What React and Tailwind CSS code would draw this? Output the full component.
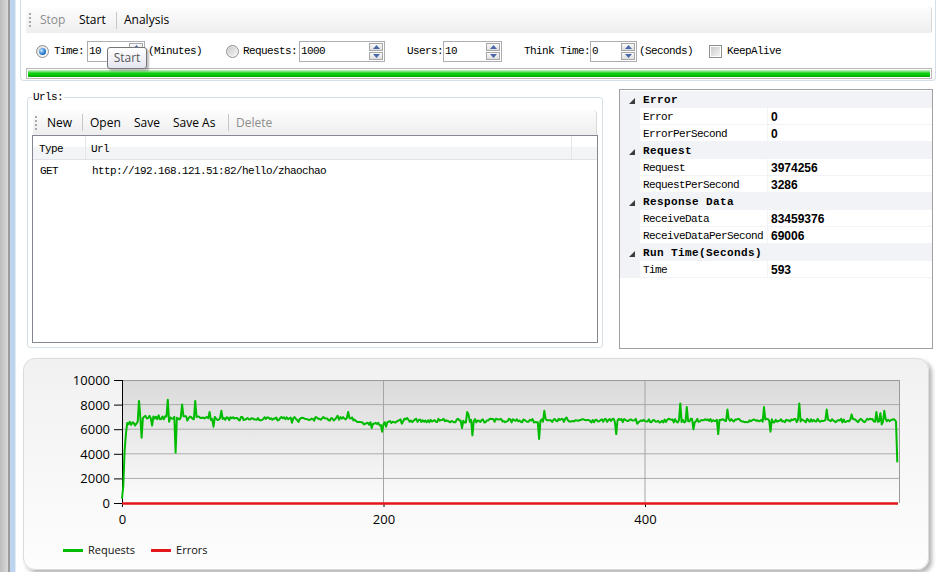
import React from "react";

const MONO = "font-['Liberation_Mono',monospace] text-[11px] tracking-[-0.6px]";

function mulberry32(a) {
  return function () {
    a |= 0;
    a = (a + 0x6d2b79f5) | 0;
    let t = Math.imul(a ^ (a >>> 15), 1 | a);
    t = (t + Math.imul(t ^ (t >>> 7), 61 | t)) ^ t;
    return ((t ^ (t >>> 14)) >>> 0) / 4294967296;
  };
}

const OVERRIDES = {
  0: 350, 1: 1400, 2: 4200, 3: 5600, 4: 6500, 5: 6400, 6: 6600, 7: 6350, 8: 6550, 9: 6500,
  10: 6300, 11: 6450, 12: 6600, 13: 8300, 14: 7000, 15: 5300, 16: 6900, 23: 6300, 35: 8400,
  41: 4100, 46: 8000, 56: 8300, 67: 7400, 70: 6200, 76: 7500, 165: 7100, 173: 7400, 191: 6100,
  199: 5800, 260: 6100, 264: 7400, 265: 7200, 268: 5500, 319: 5200, 323: 7500, 378: 5600,
  427: 8100, 432: 7800, 437: 6000, 456: 5600, 463: 7600, 491: 7800, 496: 5800, 518: 8100,
  539: 7600, 558: 7200, 577: 7400, 580: 7300, 583: 7500, 593: 3300,
};

function baseAt(s) {
  if (s < 80) return 6980 - (s - 16) * 2;
  if (s < 175) return 6850;
  if (s < 185) return 6850 - (s - 175) * 40;
  if (s < 200) return 6450;
  if (s < 215) return 6450 + (s - 200) * 17;
  return 6700;
}

const rand = mulberry32(42);
const POINTS = [];
for (let s = 0; s <= 593; s++) {
  let v;
  if (OVERRIDES[s] !== undefined) v = OVERRIDES[s];
  else {
    v = baseAt(s) + (rand() - 0.5) * 300;
    if (rand() < 0.06) v += (rand() - 0.5) * 700;
  }
  const x = 98 + s * 1.3075;
  const y = 144 - v * 0.0123;
  POINTS.push(`${x.toFixed(1)},${y.toFixed(1)}`);
}
const POLY = POINTS.join(" ");

function Grip() {
  return (
    <div className="flex flex-col gap-[2px]">
      <span className="h-[2px] w-[2px] bg-[#a9a9a9]" />
      <span className="h-[2px] w-[2px] bg-[#a9a9a9]" />
      <span className="h-[2px] w-[2px] bg-[#a9a9a9]" />
      <span className="h-[2px] w-[2px] bg-[#a9a9a9]" />
    </div>
  );
}

function Sep() {
  return <span className="h-[17px] w-[1px] bg-[#c6c6c6]" />;
}

function Radio({ checked }) {
  return (
    <span className="flex h-[13px] w-[13px] shrink-0 items-center justify-center rounded-full border border-[#8e8f8f] bg-[linear-gradient(135deg,#dcdcdc,#ffffff)]">
      {checked ? (
        <span className="h-[7px] w-[7px] rounded-full bg-[radial-gradient(circle_at_35%_35%,#c8e6ff,#2d7fd3_55%,#12468f)]" />
      ) : (
        <span className="h-[9px] w-[9px] rounded-full bg-[linear-gradient(135deg,#c9c9c9,#f6f6f6)]" />
      )}
    </span>
  );
}

function Arrow({ up }) {
  return (
    <svg width="7" height="4" viewBox="0 0 7 4">
      {up ? <polygon points="0,4 7,4 3.5,0" fill="#4a68a8" /> : <polygon points="0,0 7,0 3.5,4" fill="#4a68a8" />}
    </svg>
  );
}

function Spin({ value, width }) {
  return (
    <div className="flex h-[21px] shrink-0 border border-[#abadb3] bg-white" style={{ width }}>
      <span className={`flex-1 pl-[1px] leading-[18px] text-black ${MONO}`}>{value}</span>
      <div className="flex flex-col justify-center gap-[1px] pr-[1px]">
        <span className="flex h-[8px] w-[14px] items-center justify-center border border-[#a7a7a7] bg-linear-to-b from-[#fafafa] to-[#dedede]">
          <Arrow up />
        </span>
        <span className="flex h-[8px] w-[14px] items-center justify-center border border-[#a7a7a7] bg-linear-to-b from-[#fafafa] to-[#dedede]">
          <Arrow />
        </span>
      </div>
    </div>
  );
}

function TopGroup() {
  return (
    <div className="ml-[4px] flex w-[916px] flex-col rounded-b-[4px] border border-t-0 border-[#d5dfe5] pl-[5px] pr-[3px] pb-[1px] pt-[7px]">
      <div className="flex h-[26px] items-center rounded-r-[3px] border-r border-[#d9d9d9] bg-linear-to-b from-[#fdfdfd] to-[#eeeeee] text-[12px]">
        <span className="ml-[3px]">
          <Grip />
        </span>
        <span className="ml-[9px] w-[39px] text-[#8d8d8d]">Stop</span>
        <span className="w-[37px] text-black">Start</span>
        <Sep />
        <span className="ml-[7px] text-black">Analysis</span>
      </div>
      <div className={`mt-[8px] flex h-[21px] items-center text-black ${MONO}`}>
        <span className="ml-[10px]">
          <Radio checked />
        </span>
        <span className="ml-[5px]">Time:</span>
        <span className="ml-[3px]">
          <Spin value="10" width={58} />
        </span>
        <span className="ml-[3px]">(Minutes)</span>
        <span className="ml-[24px]">
          <Radio />
        </span>
        <span className="ml-[4px]">Requests:</span>
        <span className="ml-[2px]">
          <Spin value="1000" width={86} />
        </span>
        <span className="ml-[22px]">Users:</span>
        <Spin value="10" width={59} />
        <span className="ml-[22px]">Think Time:</span>
        <Spin value="0" width={47} />
        <span className="ml-[2px]">(Seconds)</span>
        <span className="ml-[16px] flex h-[13px] w-[13px] items-center justify-center border border-[#8e8f8f] bg-white">
          <span className="h-[9px] w-[9px] bg-[linear-gradient(135deg,#cbcbcb,#f4f4f4)]" />
        </span>
        <span className="ml-[5px]">KeepAlive</span>
      </div>
      <div className="mt-[6px] h-[11px] border border-[#b8b8b8] bg-white p-[1px]">
        <div className="h-full w-full bg-[linear-gradient(to_bottom,#c4f2c4_0%,#7fe37f_22%,#12d012_45%,#07c607_75%,#0a9c0a_100%)]" />
      </div>
    </div>
  );
}

function UrlsBox() {
  return (
    <fieldset className="ml-[11px] mt-[1px] w-[576px] rounded-[3px] border border-[#d5dfe5] px-[4px] pb-[4px]">
      <legend className={`px-[1px] leading-[14px] text-black ${MONO}`}>Urls:</legend>
      <div className="mx-[1px] mt-[6px] flex h-[25px] items-center rounded-tr-[4px] border-r border-[#d9d9d9] bg-linear-to-b from-[#fdfdfd] to-[#eeeeee] text-[12px]">
        <span className="ml-[2px]">
          <Grip />
        </span>
        <span className="ml-[10px] w-[35px] text-black">New</span>
        <Sep />
        <span className="ml-[7px] w-[44px] text-black">Open</span>
        <span className="w-[39px] text-black">Save</span>
        <span className="w-[55px] text-black">Save As</span>
        <Sep />
        <span className="ml-[7px] text-[#8d8d8d]">Delete</span>
      </div>
      <div className="h-[208px] border border-[#828790] bg-white">
        <div className={`flex h-[24px] border-b border-[#e2e3ea] bg-[linear-gradient(to_bottom,#ffffff_0%,#ffffff_45%,#f3f4f6_50%,#f3f4f6_100%)] text-black ${MONO}`}>
          <span className="flex w-[53px] items-center border-r border-[#e3e5e8] pl-[6px] pt-[3px]">Type</span>
          <span className="flex w-[486px] items-center border-r border-[#e3e5e8] pl-[5px] pt-[3px]">Url</span>
          <span className="flex-1" />
        </div>
        <div className={`flex h-[20px] items-center pt-[2px] text-black ${MONO}`}>
          <span className="w-[53px] pl-[7px]">GET</span>
          <span className="pl-[6px]">http://192.168.121.51:82/hello/zhaochao</span>
        </div>
      </div>
    </fieldset>
  );
}

const GROUPS = [
  { name: "Error", rows: [["Error", "0"], ["ErrorPerSecond", "0"]] },
  { name: "Request", rows: [["Request", "3974256"], ["RequestPerSecond", "3286"]] },
  { name: "Response Data", rows: [["ReceiveData", "83459376"], ["ReceiveDataPerSecond", "69006"]] },
  { name: "Run Time(Seconds)", rows: [["Time", "593"]] },
];

function Tri() {
  return (
    <svg width="6" height="6" viewBox="0 0 6 6">
      <polygon points="6,0 6,6 0,6" fill="#3c3c3c" />
    </svg>
  );
}

function PropGrid() {
  return (
    <div className="ml-[16px] flex h-[260px] w-[314px] flex-col border border-[#a0a0a0] bg-white pt-[1px]">
      {GROUPS.map((g) => (
        <React.Fragment key={g.name}>
          <div className="flex h-[17px] items-center bg-[#f1f3f7] pt-[2px]">
            <span className="flex w-[20px] justify-center pl-[4px]">
              <Tri />
            </span>
            <span className="pl-[3px] font-['Liberation_Mono',monospace] text-[11px] font-bold tracking-[0.4px] text-black">
              {g.name}
            </span>
          </div>
          {g.rows.map(([n, v]) => (
            <div key={n} className="flex h-[17px] bg-[#f1f3f7]">
              <span className="w-[20px]" />
              <span className={`flex h-[16px] w-[127px] items-center bg-white pl-[3px] pt-[2px] text-black ${MONO}`}>{n}</span>
              <span className="ml-[1px] flex h-[16px] flex-1 items-center bg-white pl-[3px] pt-[2px] font-['Liberation_Sans',sans-serif] text-[12px] font-bold text-black">
                {v}
              </span>
            </div>
          ))}
        </React.Fragment>
      ))}
    </div>
  );
}

function Chart() {
  const yTicks = [
    [10000, 21],
    [8000, 45.6],
    [6000, 70.2],
    [4000, 94.8],
    [2000, 119.4],
    [0, 144],
  ];
  const xTicks = [
    [0, 98],
    [200, 359.5],
    [400, 621],
  ];
  return (
    <div className="ml-[7px] mt-[9px] h-[212px] w-[906px] rounded-[12px] border border-[#dcdcdc] bg-linear-to-b from-[#f1f1f1] to-[#fdfdfd] shadow-[3px_3px_4px_rgba(0,0,0,0.3)]">
      <svg width="904" height="180" viewBox="0 0 904 180" className="block font-['Open_Sans',sans-serif]">
        <defs>
          <linearGradient id="plotbg" x1="0" y1="0" x2="0" y2="1">
            <stop offset="0" stopColor="#dadada" />
            <stop offset="1" stopColor="#fcfcfc" />
          </linearGradient>
        </defs>
        <rect x="98" y="21" width="777" height="123" fill="url(#plotbg)" />
        {yTicks.slice(1, 5).map(([v, y]) => (
          <line key={v} x1="98" x2="875" y1={y} y2={y} stroke="#ababab" strokeWidth="1" />
        ))}
        {xTicks.slice(1).map(([v, x]) => (
          <line key={v} x1={x} x2={x} y1="21" y2="144" stroke="#a5a5a5" strokeWidth="1" />
        ))}
        <line x1="98" x2="875" y1="21.5" y2="21.5" stroke="#9a9a9a" />
        <line x1="875.5" x2="875.5" y1="21" y2="144" stroke="#9a9a9a" />
        <line x1="98.5" x2="98.5" y1="21" y2="148" stroke="#000" />
        {yTicks.map(([v, y]) => (
          <g key={v}>
            <line x1="90" x2="98" y1={y + 0.5} y2={y + 0.5} stroke="#000" />
            <text x="86" y={y + 5} textAnchor="end" fontSize="13" fill="#000">
              {v}
            </text>
          </g>
        ))}
        {xTicks.map(([v, x]) => (
          <g key={v}>
            <line x1={x + 0.5} x2={x + 0.5} y1="144" y2="148" stroke="#000" />
            <text x={x + 0.5} y="165" textAnchor="middle" fontSize="13" fill="#000">
              {v}
            </text>
          </g>
        ))}
        <polyline points={POLY} fill="none" stroke="#00bb00" strokeWidth="2" strokeLinejoin="round" />
        <line x1="98" x2="874" y1="144.5" y2="144.5" stroke="#e3161c" strokeWidth="2.5" />
      </svg>
      <div className="flex h-[22px] items-center text-[11px] text-[#111]">
        <span className="ml-[39px] h-[3px] w-[20px] bg-[#00bb00]" />
        <span className="ml-[5px]">Requests</span>
        <span className="ml-[16px] h-[3px] w-[20px] bg-[#e3161c]" />
        <span className="ml-[5px]">Errors</span>
      </div>
    </div>
  );
}

export default function App() {
  return (
    <div className="relative flex h-[572px] w-[940px] overflow-hidden bg-white font-['Open_Sans',sans-serif]">
      <div className="flex h-full w-[16px] shrink-0">
        <div className="w-[8px] bg-linear-to-r from-[#bdbdbd] to-[#d9d9d9]" />
        <div className="w-[2px] bg-[#9c9c9c]" />
        <div className="w-[5px] bg-[#bcd4ee]" />
        <div className="w-[1px] bg-[#e2ebf5]" />
      </div>
      <div className="flex w-[924px] flex-col">
        <TopGroup />
        <div className="mt-[8px] flex h-[260px] items-start">
          <UrlsBox />
          <PropGrid />
        </div>
        <Chart />
      </div>
      <div className="absolute left-[107px] top-[47px] flex h-[22px] w-[40px] items-center justify-center rounded-[3px] border border-[#767676] bg-linear-to-b from-[#ffffff] to-[#e4e5f0] text-[12px] text-[#575757] shadow-[2px_2px_2px_rgba(0,0,0,0.25)]">
        Start
      </div>
    </div>
  );
}
